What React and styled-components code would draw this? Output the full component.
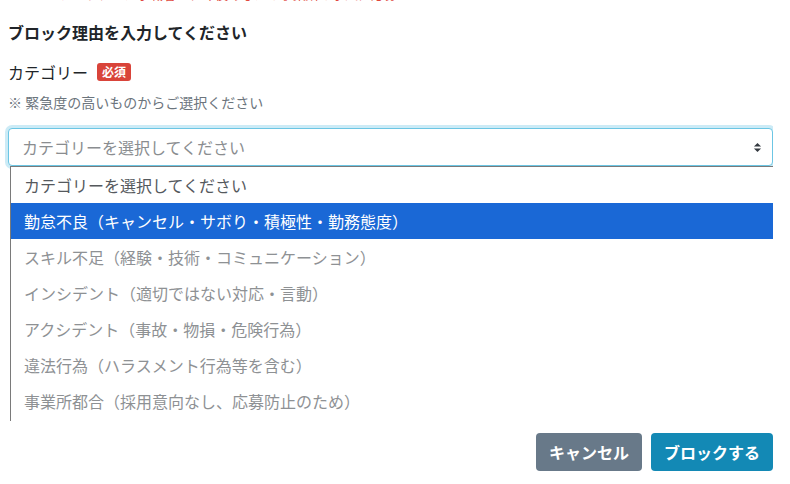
import React from "react";
import styled, { createGlobalStyle } from "styled-components";

const GlobalStyle = createGlobalStyle`
  body {
    margin: 0;
    background: #ffffff;
    font-family: "Noto Sans CJK JP", "Noto Sans", sans-serif;
    color: #212529;
  }
`;

const options = [
  "カテゴリーを選択してください",
  "勤怠不良（キャンセル・サボり・積極性・勤務態度）",
  "スキル不足（経験・技術・コミュニケーション）",
  "インシデント（適切ではない対応・言動）",
  "アクシデント（事故・物損・危険行為）",
  "違法行為（ハラスメント行為等を含む）",
  "事業所都合（採用意向なし、応募防止のため）",
];

const App = () => {
  return (
    <Page>
      <GlobalStyle />
      <Warning>※ブロックした求職者は、今後あなたの事業所の求人に応募できなくなります（解除は設定画面から可能です）</Warning>
      <Heading>ブロック理由を入力してください</Heading>
      <LabelRow>
        <Label>カテゴリー</Label>
        <Badge>必須</Badge>
      </LabelRow>
      <Note>※ 緊急度の高いものからご選択ください</Note>
      <SelectWrap>
        <Select>
          <Placeholder>カテゴリーを選択してください</Placeholder>
          <Caret viewBox="0 0 10 12">
            <path d="M1 5 L5 1 L9 5 Z M1 7 L5 11 L9 7 Z" fill="#343a40" />
          </Caret>
        </Select>
        <Menu>
          {options.map((o, i) => (
            <Option key={o} $selected={i === 1} $first={i === 0}>
              {o}
            </Option>
          ))}
        </Menu>
      </SelectWrap>
      <Footer>
        <Button $bg="#687989">キャンセル</Button>
        <Button $bg="#1389b5">ブロックする</Button>
      </Footer>
    </Page>
  );
};

const Page = styled.div`
  width: 773px;
  padding: 0 0 0 8px;
  overflow: hidden;
  height: 484px;
  box-sizing: border-box;
`;

const Warning = styled.div`
  color: #e0483e;
  font-size: 13px;
  line-height: 18px;
  margin: -15px 0 0 38px;
  white-space: nowrap;
  width: 350px;
  overflow: hidden;
`;

const Heading = styled.h2`
  margin: 17px 0 0;
  font-size: 16px;
  font-weight: 700;
  line-height: 24px;
  color: #212529;
`;

const LabelRow = styled.div`
  display: flex;
  align-items: center;
  gap: 9px;
  margin-top: 16px;
  height: 24px;
`;

const Label = styled.span`
  font-size: 16px;
  color: #212529;
`;

const Badge = styled.span`
  background: #d9443a;
  color: #ffffff;
  font-size: 12px;
  font-weight: 700;
  padding: 1px 5px;
  border-radius: 3px;
  line-height: 16px;
`;

const Note = styled.div`
  margin-top: 8px;
  font-size: 14px;
  color: #6c757d;
  line-height: 20px;
`;

const SelectWrap = styled.div`
  position: relative;
  margin-top: 16px;
`;

const Select = styled.div`
  height: 38px;
  box-sizing: border-box;
  border: 1px solid #6cc6e4;
  border-radius: 4px;
  box-shadow: 0 0 0 3px rgba(108, 198, 228, 0.35);
  display: flex;
  align-items: center;
  justify-content: space-between;
  padding: 0 10px 0 13px;
  background: #fff;
`;

const Placeholder = styled.span`
  font-size: 16px;
  color: #8a8d90;
`;

const Caret = styled.svg`
  width: 9px;
  height: 11px;
`;

const Menu = styled.div`
  position: absolute;
  top: 38px;
  left: 2px;
  right: 0;
  height: 254px;
  background: #fff;
  border-top: 1px solid #7a7a7a;
  border-left: 1px solid #7a7a7a;
  overflow: hidden;
`;

const Option = styled.div`
  height: 36px;
  display: flex;
  align-items: center;
  padding-left: 13px;
  font-size: 16px;
  background: ${(p) => (p.$selected ? "#1a68d6" : "transparent")};
  color: ${(p) => (p.$selected ? "#ffffff" : p.$first ? "#55595d" : "#8e9194")};
`;

const Footer = styled.div`
  display: flex;
  justify-content: flex-end;
  gap: 9px;
  margin-top: 267px;
`;

const Button = styled.button`
  height: 38px;
  padding: 0 13px;
  border: none;
  border-radius: 4px;
  background: ${(p) => p.$bg};
  color: #fff;
  font-family: "Noto Sans CJK JP", sans-serif;
  font-size: 16px;
  font-weight: 700;
`;

export default App;
